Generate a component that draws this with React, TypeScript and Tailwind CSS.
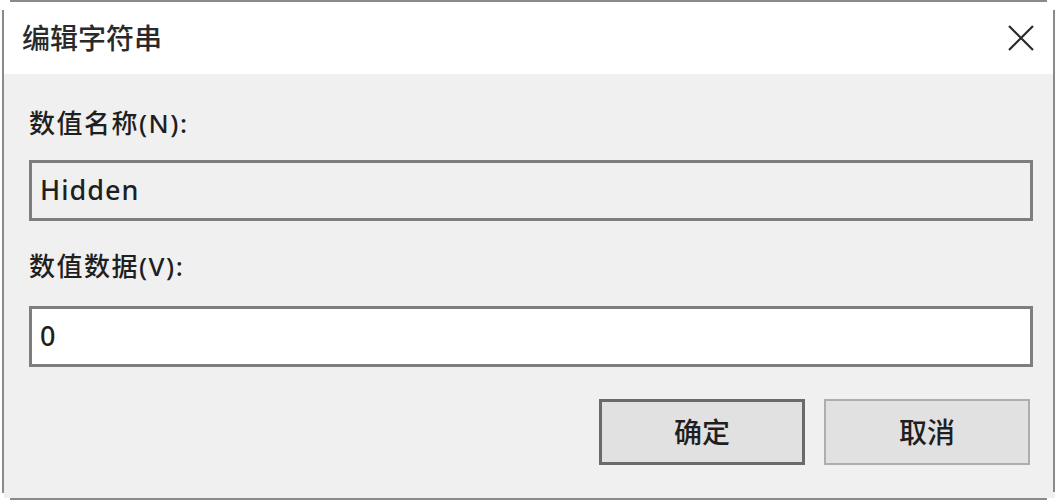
import React from "react";

const FONT = { fontFamily: '"Noto Sans", "Noto Sans CJK SC", sans-serif' };

export default function App() {
  return (
    <div className="relative w-[1059px] h-[504px] bg-white overflow-hidden text-[#1f1f1f]" style={FONT}>
      <div className="mt-[2px] mx-[4px] h-[496px] flex flex-col">
        <div className="h-[72px] bg-white flex items-center justify-between pl-[18px] pr-[21px] shrink-0">
          <span className="text-[28px] leading-[32px] font-medium text-[#2a2a2a]">编辑字符串</span>
          <svg width="26" height="26" viewBox="0 0 26 26" className="block">
            <path d="M1 1 L25 25 M25 1 L1 25" stroke="#2a2a2a" strokeWidth="2.2" />
          </svg>
        </div>
        <div className="flex-1 bg-[#f0f0f0] pl-[25px] pr-[22px] pt-[34px] flex flex-col">
          <div className="text-[26px] leading-[30px] tracking-[1.5px] font-medium">数值名称(N):</div>
          <div className="mt-[22px] h-[61px] border-[3px] border-[#7e7e7e] bg-[#f0f0f0] flex items-center pl-[8px]">
            <span className="text-[27px] tracking-[1px] font-medium">Hidden</span>
          </div>
          <div className="mt-[30px] text-[26px] leading-[30px] tracking-[1.5px] font-medium">数值数据(V):</div>
          <div className="mt-[25px] h-[61px] border-[3px] border-[#7e7e7e] bg-white flex items-center pl-[8px]">
            <span className="text-[27px] font-medium">0</span>
          </div>
          <div className="mt-[32px] flex justify-end gap-[19px] pr-[3px]">
            <button className="w-[206px] h-[66px] border-[3px] border-[#6a6a6a] bg-[#e1e1e1] text-[28px] font-medium flex items-center justify-center">
              确定
            </button>
            <button className="w-[206px] h-[66px] border-[2px] border-[#adadad] bg-[#e1e1e1] text-[28px] font-medium flex items-center justify-center">
              取消
            </button>
          </div>
        </div>
      </div>
      <div className="absolute left-[10px] right-[12px] top-0 h-[2px] bg-[#8a8a8a]" />
      <div className="absolute left-[10px] right-[12px] top-[498px] h-[2px] bg-[#8a8a8a]" />
      <div className="absolute left-[2px] w-[2px] top-[10px] h-[483px] bg-[#8a8a8a]" />
      <div className="absolute left-[1053px] w-[2px] top-[10px] h-[482px] bg-[#8a8a8a]" />
    </div>
  );
}
